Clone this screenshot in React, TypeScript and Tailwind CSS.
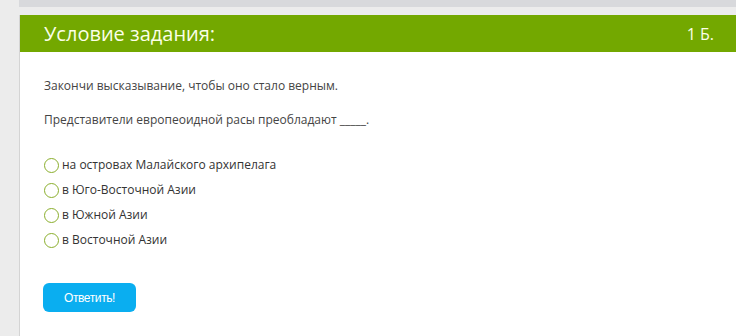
import React from "react";

const options = [
  "на островах Малайского архипелага",
  "в Юго-Восточной Азии",
  "в Южной Азии",
  "в Восточной Азии",
];

export default function App() {
  return (
    <div
      className="w-[736px] h-[336px] bg-[#ececec] flex overflow-hidden"
      style={{ fontFamily: '"Open Sans", "Liberation Sans", sans-serif' }}
    >
      <div className="w-[19px] shrink-0" />
      <div className="flex-1 flex flex-col">
        <div className="h-[7px] bg-[#d8d9dc]" />
        <div className="h-[8px]" />
        <div className="flex-1 flex flex-col border-l border-[#d4d4d4] bg-white">
          <div className="h-[37px] bg-[#73a800] flex items-center justify-between pl-[24px] pr-[22px]">
            <span className="text-[20px] text-[#fbffe8] leading-none">Условие задания:</span>
            <span className="text-[16px] text-[#fbffe8] leading-none">1 Б.</span>
          </div>
          <div className="pl-[24px] pt-[28px] text-[12px] text-[#444] leading-none">
            <p className="h-[16px]">Закончи высказывание, чтобы оно стало верным.</p>
            <p className="h-[16px] mt-[18px]">Представители европеоидной расы преобладают _____.</p>
            <div className="mt-[27px] flex flex-col gap-[9px]">
              {options.map((o) => (
                <label key={o} className="flex items-center h-[16px]">
                  <span className="w-[15px] h-[15px] rounded-full border-[1.5px] border-[#8aae2c] mr-[3px] shrink-0" />
                  <span className="text-[#333]">{o}</span>
                </label>
              ))}
            </div>
            <button
              className="mt-[35px] ml-[-1px] w-[93px] h-[29px] rounded-[6px] bg-[#0aaef0] text-white text-[12px] tracking-[-0.4px]"
              style={{ fontFamily: '"Liberation Sans Narrow", "Liberation Sans", sans-serif' }}
            >
              Ответить!
            </button>
          </div>
        </div>
      </div>
    </div>
  );
}
